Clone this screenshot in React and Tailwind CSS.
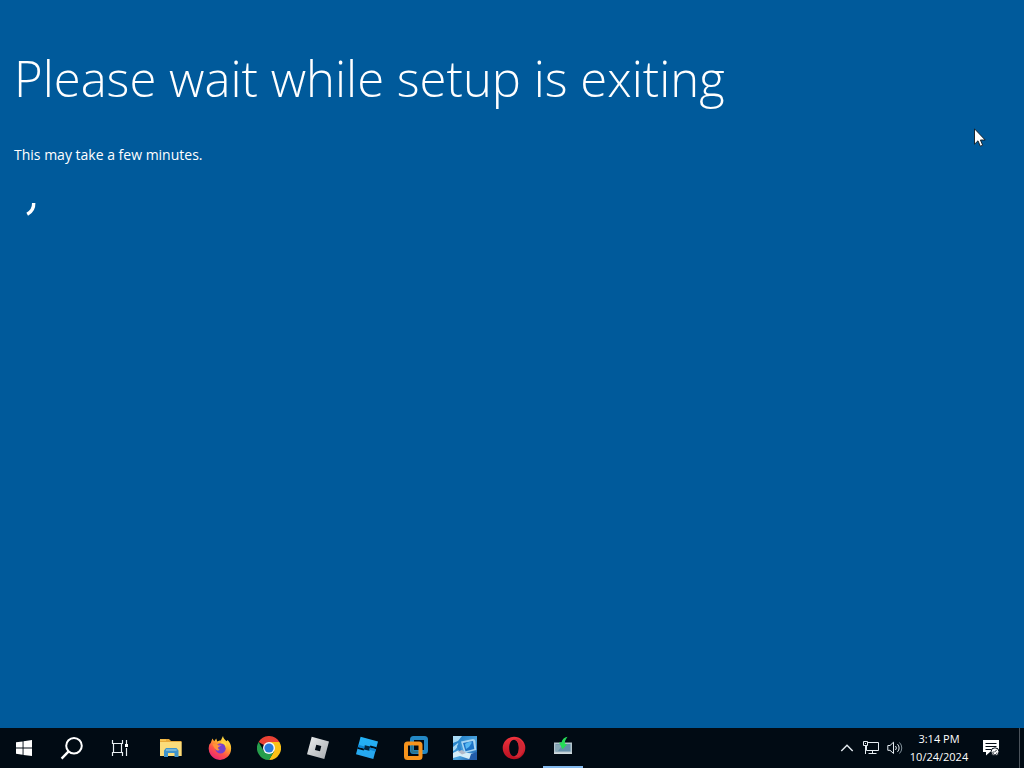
import React from "react";

function StartIcon() {
  return (
    <svg width="16" height="16" viewBox="0 0 16 16" fill="#fff" aria-hidden="true">
      <path d="M0 2.3 6.6 1.4V7.6H0zM7.5 1.2 16 0V7.6H7.5zM0 8.5H6.6V14.7L0 13.8zM7.5 8.5H16V16L7.5 14.9z" />
    </svg>
  );
}

function SearchIcon() {
  return (
    <svg width="24" height="24" viewBox="0 0 24 24" fill="none" stroke="#fff" strokeWidth="2" aria-hidden="true">
      <circle cx="14" cy="9.8" r="7.8" />
      <path d="M8.6 15.4 1.6 22.6" strokeWidth="2.4" />
    </svg>
  );
}

function TaskViewIcon() {
  return (
    <svg width="18" height="18" viewBox="0 0 18 18" fill="none" stroke="#e8eef2" aria-hidden="true">
      <path d="M1.5 1V4.500H11.500V1M1.500 17V13.500H11.500V17M2.500 4.500V13.500M10.500 4.500V13.500M15.500 1V5M15.500 9V17" strokeWidth="1.200" />
      <rect x="14" y="5" width="3" height="3" fill="#fff" stroke="none" />
    </svg>
  );
}

function ExplorerIcon() {
  return (
    <svg width="24" height="24" viewBox="0 0 24 24" aria-hidden="true">
      <path d="M1 3h9l2 2h10.500v15H1z" fill="#e8a93a" />
      <path d="M1 6h21.500v14H1z" fill="#fbdc7b" />
      <path d="M1 3.500h6v1.200H1z" fill="#ffd15c" />
      <path d="M5 21V14.500l2-2.500h10.500l2 2.500V21h-4v-4H9v4z" fill="#3f93cb" />
      <path d="M7 14h10.600" stroke="#8cc5df" strokeWidth="1.400" />
    </svg>
  );
}

function FirefoxIcon() {
  return (
    <svg width="24" height="24" viewBox="0 0 24 24" aria-hidden="true">
      <defs>
        <linearGradient id="foxBody" x1="0.85" y1="0" x2="0.25" y2="1">
          <stop offset="0" stopColor="#fff251" />
          <stop offset="0.35" stopColor="#ffb52d" />
          <stop offset="0.65" stopColor="#ff5447" />
          <stop offset="1" stopColor="#e52079" />
        </linearGradient>
      </defs>
      <path d="M2.7 7 4.4 2.4 6.2 5.3 8.2 2.5 9.3 5.5C11 4.7 12 4.5 12.8 4.6L15 0c.3 2.6 2 3.8 3.7 5.3l.8-1.2c2.7 2.6 3.8 5.4 3.6 8.5A11.2 11.2 0 1 1 1 10.1C1.1 8.8 1.7 7.8 2.7 7z" fill="url(#foxBody)" />
      <circle cx="12.5" cy="12.4" r="5.2" fill="#7541cb" />
      <path d="M12.4 7.5c2.8-.8 5.6 1 5.3 4.4 1-1.7.9-3.7-.2-5.2l-3-1.4z" fill="#ffda3f" />
      <path d="M4.5 8.3c2.2-1.2 4.1-.9 5.2.5l3 .1c-.2 1.3-1.8 1.7-2.7 2.5.1 1.2.7 2.1 1.8 2.4-1.3 1.3-3.2.7-4.3-.6C6.2 12 5.4 10.5 4.5 8.3z" fill="#ff9438" />
      <path d="M10.2 9.3h3.1" stroke="#b853ca" />
    </svg>
  );
}

function ChromeIcon() {
  return (
    <svg width="24" height="24" viewBox="0 0 24 24" aria-hidden="true">
      <path d="M12 12 1.6 6A12 12 0 0 1 22.4 6z" fill="#e94235" />
      <path d="M12 6h10.4A12 12 0 0 1 12 24l5.2-9z" fill="#fbc116" />
      <path d="M6.8 15 1.6 6A12 12 0 0 0 12 24l5.2-9z" fill="#269e4c" />
      <circle cx="12" cy="12" r="6" fill="#f5f7fc" />
      <circle cx="12" cy="12" r="4.6" fill="#2879dc" />
    </svg>
  );
}

function RobloxIcon() {
  return (
    <svg width="24" height="24" viewBox="0 0 24 24" aria-hidden="true">
      <defs>
        <linearGradient id="robloxSilver" x1="0" y1="0" x2="1" y2="1">
          <stop offset="0" stopColor="#eceeef" />
          <stop offset="1" stopColor="#a6abaf" />
        </linearGradient>
      </defs>
      <path fillRule="evenodd" d="M5.7.8 23 5.6 18.3 23 1 18.3zM10.3 8.7 8.9 14 14 15.3 15.3 10.1z" fill="url(#robloxSilver)" />
    </svg>
  );
}

function StudioIcon() {
  return (
    <svg width="24" height="24" viewBox="0 0 24 24" aria-hidden="true">
      <defs>
        <linearGradient id="studioBlue" x1="0" y1="0" x2="0.3" y2="1">
          <stop offset="0" stopColor="#22b4f8" />
          <stop offset="1" stopColor="#27a6ee" />
        </linearGradient>
      </defs>
      <path d="M5.600.8 23 5.500 18.300 23 1 18.300z" fill="url(#studioBlue)" />
      <path d="M2.900 11 9 12.600 8.800 14.500 2.300 12.800zM15.300 9.600 21.700 11.300 21.200 13.200 14.800 11.500z" fill="#010b14" />
      <path d="M9.800 9.200 15.300 10.400 14.300 14.800 8.900 13.500z" fill="#02243f" />
      <path d="M3.500 8.800 9.500 10.400 9 12.600 2.900 11zM14.800 11.500 21.200 13.200 20.600 15.400 14.300 13.800z" fill="#0c85d2" />
    </svg>
  );
}

function VmwareIcon() {
  return (
    <svg width="24" height="24" viewBox="0 0 24 24" fill="none" strokeWidth="4" aria-hidden="true">
      <rect x="8" y="2" width="14" height="14" rx="1.500" stroke="#2388c5" />
      <rect x="2" y="7.500" width="14.500" height="14.500" rx="1.500" stroke="#f7941d" />
      <path d="M8 9.500V14.500q0 1.500 1.500 1.500h4.500" stroke="#2e758c" strokeWidth="2.400" />
    </svg>
  );
}

function DesktopToolIcon() {
  return (
    <svg width="24" height="24" viewBox="0 0 24 24" aria-hidden="true">
      <defs>
        <linearGradient id="toolSky" x1="0" y1="0" x2="1" y2="1">
          <stop offset="0" stopColor="#1673bf" />
          <stop offset="0.55" stopColor="#4ba4de" />
          <stop offset="1" stopColor="#1751a1" />
        </linearGradient>
      </defs>
      <path d="M0 0h24v24H0z" fill="url(#toolSky)" />
      <path d="M0 0h9L5 5 0 7zM0 11l5-4 1 2-4 5-2 1z" fill="#a8daf5" />
      <path d="M0 17 6 14l9 3 9 1v3l-8 2-9-3-7 2z" fill="#d4edf8" />
      <path d="M8 5.500 20 3q2 0 2.300 2l1 9-12 3z" fill="#a8d5f2" />
      <path d="M10 7 20 5l1.300 8-8.800 2.300z" fill="#1c72c5" />
      <path d="M12 8q4-3 7-1.400L16 11l-3 2z" fill="#55b7f2" />
      <path d="M6 7 9 15l-3 1-2-6z" fill="#2c83cc" />
      <path d="M5 15.500 9 14l4 3-4 1.500z" fill="#b2b9c8" />
      <path d="M18 18 24 16v8h-8z" fill="#235ca8" />
    </svg>
  );
}

function OperaIcon() {
  return (
    <svg width="24" height="24" viewBox="0 0 24 24" aria-hidden="true">
      <defs>
        <linearGradient id="operaRed" x1="0" y1="0" x2="0" y2="1">
          <stop offset="0" stopColor="#f0343e" />
          <stop offset="1" stopColor="#b80f20" />
        </linearGradient>
      </defs>
      <path fillRule="evenodd" d="M12 .7a11.3 11.3 0 1 0 0 22.6A11.3 11.3 0 1 0 12 .7zm0 3.1c3.1 0 4.8 3.8 4.8 8.2s-1.7 8.2-4.8 8.2S7.2 16.4 7.2 12 8.900 3.800 12 3.800z" fill="url(#operaRed)" />
      <path d="M12 3.800c2-1.800 5-1.300 7 1.200a11 11 0 0 1 0 14c-2 2.500-5 3-7 1.200 3.100 0 4.800-3.800 4.800-8.200S15.100 3.800 12 3.800z" fill="#cf2835" />
    </svg>
  );
}

function SetupIcon() {
  return (
    <svg width="24" height="24" viewBox="0 0 24 24" aria-hidden="true">
      <path d="M3 6.500h18V18H3z" fill="#b3c4cb" />
      <path d="M4.500 8h15v7.500h-15z" fill="#648fa9" />
      <path d="M5 8.500h7L7 15H5z" fill="#86a8b5" />
      <path d="M3 16.500h18V18H3z" fill="#d0dadd" />
      <path d="M16.500.8C13 1.500 11 3.500 10.500 6.500H8l3.600 6.800L16 8.500l-2.200-1C13.800 5.500 14.500 3.500 16.500.8z" fill="#26dc57" />
    </svg>
  );
}

function ChevronIcon() {
  return (
    <svg width="14" height="10" viewBox="0 0 14 10" fill="none" stroke="#e6edf2" strokeWidth="1.400" aria-hidden="true">
      <path d="M1.300 8 7 2.300 12.700 8" />
    </svg>
  );
}

function NetworkIcon() {
  return (
    <svg width="18" height="16" viewBox="0 0 18 16" fill="none" stroke="#e6edf2" aria-hidden="true">
      <path d="M5.500 2.500H16.500V10.500H4.500V5.500M10.500 10.500V13.500M6.500 13.500H14.500" />
      <path d="M1.500 1.500H5.500V5.500H1.500zM3.500 5.500V14M3.500 3V4" />
    </svg>
  );
}

function VolumeIcon() {
  return (
    <svg width="16" height="16" viewBox="0 0 16 16" fill="none" stroke="#e6edf2" aria-hidden="true">
      <path d="M.8 5.500H3L6.500 2.200V13.500L3 10.300H.8z" />
      <path d="M8.500 6a3 3 0 0 1 0 4M10.500 4.200a5.300 5.300 0 0 1 0 7.600" />
      <path d="M12.500 2.500a7.800 7.800 0 0 1 0 11" stroke="#82919a" />
    </svg>
  );
}

function NotificationIcon() {
  return (
    <svg width="18" height="18" viewBox="0 0 18 18" aria-hidden="true">
      <path d="M1 1h16v12H8l-4 3.500V13H1z" fill="#fff" />
      <path d="M3.500 4.500h11M3.500 7.500h11M3.500 10.500h6" stroke="#020b14" />
      <circle cx="13" cy="12.800" r="4" fill="#fff" stroke="#020b14" />
      <path d="M11.300 12.500a2 2 0 1 0 3.600 1.200M14.800 10.800l-2.500 2.500" fill="none" stroke="#020b14" strokeWidth="0.900" />
    </svg>
  );
}

const systemButtons = [
  { label: "Start", Icon: StartIcon },
  { label: "Search", Icon: SearchIcon },
  { label: "Task View", Icon: TaskViewIcon },
];

const apps = [
  { label: "File Explorer", Icon: ExplorerIcon },
  { label: "Firefox", Icon: FirefoxIcon },
  { label: "Google Chrome", Icon: ChromeIcon },
  { label: "Roblox Player", Icon: RobloxIcon },
  { label: "Roblox Studio", Icon: StudioIcon },
  { label: "VMware Workstation", Icon: VmwareIcon },
  { label: "Desktop tool", Icon: DesktopToolIcon },
  { label: "Opera", Icon: OperaIcon },
  { label: "Windows Setup", Icon: SetupIcon, active: true },
];

function TaskbarButton({ label, Icon, active }) {
  return (
    <button type="button" aria-label={label} className="relative flex h-10 w-12 items-center justify-center hover:bg-white/10">
      <Icon />
      {active && <span className="absolute inset-x-1 bottom-0 h-0.5 bg-[#83b9ee]" />}
    </button>
  );
}

function Taskbar() {
  return (
    <footer className="flex h-10 items-center justify-between bg-[#010b14] text-white">
      <nav aria-label="Taskbar" className="flex gap-[3px]">
        <div className="flex">
          {systemButtons.map((item) => (
            <TaskbarButton key={item.label} {...item} />
          ))}
        </div>
        <div className="flex gap-px">
          {apps.map((item) => (
            <TaskbarButton key={item.label} {...item} />
          ))}
        </div>
      </nav>
      <div className="flex h-10 items-center">
        <button type="button" aria-label="Show hidden icons" className="flex h-10 w-6 items-center justify-center">
          <ChevronIcon />
        </button>
        <button type="button" aria-label="Network" className="flex h-10 w-6 items-center justify-center">
          <NetworkIcon />
        </button>
        <button type="button" aria-label="Volume" className="flex h-10 w-6 items-center justify-center">
          <VolumeIcon />
        </button>
        <button type="button" className="w-16 text-center text-[11px] leading-[18px]">
          <span className="block">3:14 PM</span>
          <span className="block">10/24/2024</span>
        </button>
        <button type="button" aria-label="Notifications" className="flex h-10 w-10 items-center justify-center">
          <NotificationIcon />
        </button>
        <button type="button" aria-label="Show desktop" className="ml-2 h-10 w-[5px] border-l border-[#4b535b]" />
      </div>
    </footer>
  );
}

export default function App() {
  return (
    <div className="relative flex min-h-screen flex-col overflow-hidden bg-[#005a9b] font-['Open_Sans','Noto_Sans',sans-serif] text-white">
      <main className="flex-1 px-3.5 pt-11">
        <h1 className="text-[49px] leading-[68px] font-light">Please wait while setup is exiting</h1>
        <p className="mt-8 text-sm leading-[22px]">This may take a few minutes.</p>
        <svg className="mt-4 h-10 w-10" viewBox="0 0 40 40" fill="none" role="img" aria-label="Loading">
          <path d="M19.700 21Q20 28.500 13.200 32.300" stroke="#fff" strokeWidth="3.400" />
        </svg>
      </main>
      <Taskbar />
      <svg className="absolute top-32 right-[38px] h-5 w-3" viewBox="0 0 12 20" aria-hidden="true">
        <path d="M.5.8V16.200L4 12.800 6.300 18.200 8.700 17.200 6.400 12H11.200z" fill="#fff" stroke="#101820" strokeWidth="0.900" />
      </svg>
    </div>
  );
}
